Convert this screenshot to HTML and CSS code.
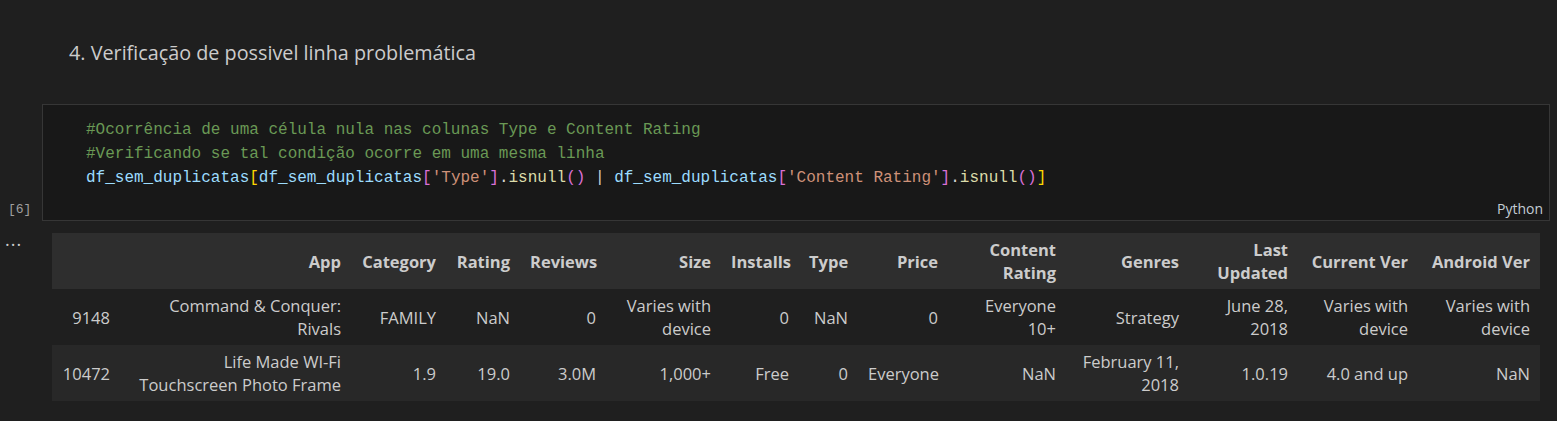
FILE: index.html
```html
<!DOCTYPE html>
<html lang="pt">
<head>
<meta charset="utf-8">
<title>Notebook</title>
<link rel="stylesheet" href="styles.css">
</head>
<body>
<div class="notebook">
  <div class="md-cell">
    <p class="md-text">4. Verificação de possivel linha problemática</p>
  </div>

  <div class="code-row">
    <div class="gutter"><span class="exec-count">[6]</span></div>
    <div class="code-cell">
      <div class="code">
        <div class="line"><span class="c">#Ocorrência de uma célula nula nas colunas Type e Content Rating</span></div>
        <div class="line"><span class="c">#Verificando se tal condição ocorre em uma mesma linha</span></div>
        <div class="line"><span class="v">df_sem_duplicatas</span><span class="b1">[</span><span class="v">df_sem_duplicatas</span><span class="b2">[</span><span class="s">'Type'</span><span class="b2">]</span><span class="p">.</span><span class="f">isnull</span><span class="b2">()</span><span class="p"> | </span><span class="v">df_sem_duplicatas</span><span class="b2">[</span><span class="s">'Content Rating'</span><span class="b2">]</span><span class="p">.</span><span class="f">isnull</span><span class="b2">()</span><span class="b1">]</span></div>
      </div>
      <div class="cell-footer"><span class="lang">Python</span></div>
    </div>
  </div>

  <div class="output-row">
    <div class="gutter out-gutter"><span class="more">···</span></div>
    <div class="output">
      <table class="df">
        <colgroup>
          <col class="w-idx"><col class="w-app"><col class="w-cat"><col class="w-rat"><col class="w-rev"><col class="w-size"><col class="w-inst"><col class="w-type"><col class="w-price"><col class="w-cr"><col class="w-gen"><col class="w-lu"><col class="w-cv"><col class="w-av">
        </colgroup>
        <thead>
          <tr>
            <th></th><th>App</th><th>Category</th><th>Rating</th><th>Reviews</th><th>Size</th><th>Installs</th><th>Type</th><th>Price</th><th>Content Rating</th><th>Genres</th><th>Last Updated</th><th>Current Ver</th><th>Android Ver</th>
          </tr>
        </thead>
        <tbody>
          <tr>
            <td>9148</td><td>Command &amp; Conquer: Rivals</td><td>FAMILY</td><td>NaN</td><td>0</td><td>Varies with device</td><td>0</td><td>NaN</td><td>0</td><td>Everyone 10+</td><td>Strategy</td><td>June 28, 2018</td><td>Varies with device</td><td>Varies with device</td>
          </tr>
          <tr class="alt">
            <td>10472</td><td>Life Made WI-Fi Touchscreen Photo Frame</td><td>1.9</td><td>19.0</td><td>3.0M</td><td>1,000+</td><td>Free</td><td>0</td><td>Everyone</td><td>NaN</td><td>February 11, 2018</td><td>1.0.19</td><td>4.0 and up</td><td>NaN</td>
          </tr>
        </tbody>
      </table>
    </div>
  </div>
</div>
</body>
</html>
```
FILE: styles.css
```css
html, body {
  margin: 0;
  padding: 0;
  background: #1f1f1f;
  color: #cccccc;
  font-family: "Open Sans", "Noto Sans", sans-serif;
}

.notebook {
  display: flex;
  flex-direction: column;
}

.md-cell {
  height: 104px;
  padding-left: 69px;
  box-sizing: border-box;
  padding-top: 38px;
}

.md-text {
  margin: 0;
  font-size: 19.8px;
  line-height: 30px;
  color: #cccccc;
}

.code-row {
  display: flex;
}

.gutter {
  width: 42px;
  flex: none;
  display: flex;
  box-sizing: border-box;
}

.exec-count {
  align-self: flex-end;
  margin-bottom: 3px;
  padding-left: 8px;
  font-family: "Liberation Mono", monospace;
  font-size: 13px;
  line-height: 16px;
  color: #a0a0a0;
}

.code-cell {
  flex: 1;
  margin-right: 7px;
  background: #181818;
  border: 1px solid #363636;
}

.code {
  padding: 13px 0 0 43px;
  font-family: "Liberation Mono", monospace;
  font-size: 16px;
  line-height: 24px;
  color: #d4d4d4;
}

.line {
  white-space: pre;
  height: 24px;
}

.c { color: #6a9955; }
.v { color: #9cdcfe; }
.s { color: #ce9178; }
.f { color: #dcdcaa; }
.p { color: #d4d4d4; }
.b1 { color: #ffd700; }
.b2 { color: #da70d6; }

.cell-footer {
  display: flex;
  justify-content: flex-end;
  padding: 9px 6px 1px 0;
}

.lang {
  font-size: 14px;
  line-height: 20px;
  color: #c3ccd4;
}

.output-row {
  display: flex;
  margin-top: 12px;
}

.out-gutter {
  align-items: flex-start;
}

.more {
  padding-left: 5px;
  margin-top: 1px;
  font-size: 18px;
  line-height: 20px;
  letter-spacing: 1px;
  color: #cccccc;
}

.output {
  padding-left: 10px;
}

.df {
  border-collapse: collapse;
  table-layout: fixed;
  width: 1488px;
  font-size: 16.5px;
  line-height: 23px;
  color: #cccccc;
}

.df th, .df td {
  padding: 5px 10px;
  text-align: right;
  vertical-align: middle;
  height: 46px;
}

.df thead tr {
  background: #2e2e2e;
}

.df th {
  font-weight: 700;
  color: #cccccc;
}

.df tbody tr {
  background: #1f1f1f;
}

.df tbody tr.alt {
  background: #282828;
}

.w-idx { width: 68px; }
.w-app { width: 231px; }
.w-cat { width: 95px; }
.w-rat { width: 74px; }
.w-rev { width: 86px; }
.w-size { width: 115px; }
.w-inst { width: 78px; }
.w-type { width: 59px; }
.w-price { width: 90px; }
.w-cr { width: 118px; }
.w-gen { width: 123px; }
.w-lu { width: 109px; }
.w-cv { width: 120px; }
.w-av { width: 122px; }
```
